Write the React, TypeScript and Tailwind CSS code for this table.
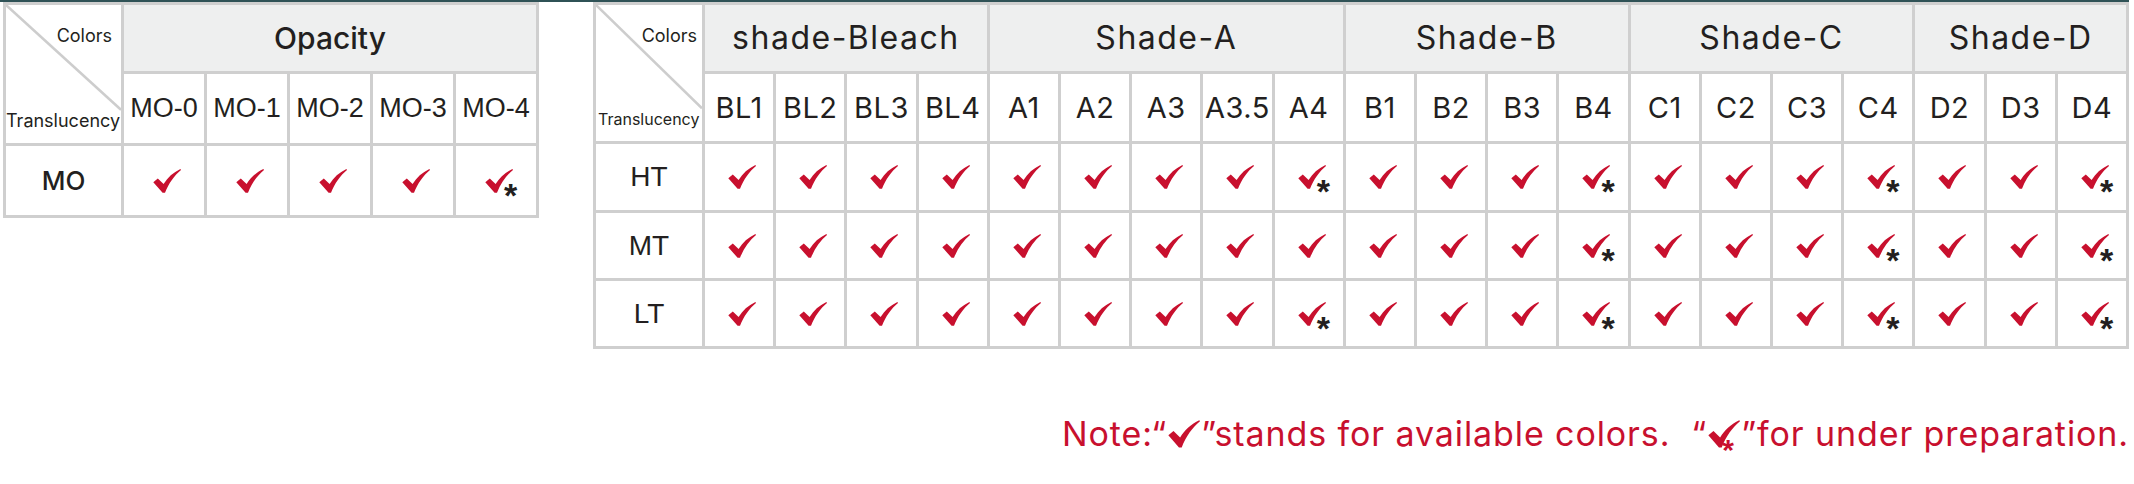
import React from "react";

const Check = ({ className = "" }: { className?: string }) => (
  <svg viewBox="0 0 28 24" className={className} aria-hidden="true">
    <path
      d="M0.3 13.2 L4.8 9.4 L10.6 15 C14.6 8.6 20.2 3.4 27.4 0 L28 0.9 C21.2 6.6 15.8 14 12 23.8 L9.6 23.8 Z"
      fill="#c8102e"
    />
  </svg>
);

const Mark = ({ star }: { star?: boolean }) => (
  <span className="relative inline-block w-[28px] h-[24px] translate-x-[3px]">
    <Check className="block w-[28px] h-[24px]" />
    {star && (
      <span className="absolute left-[19px] top-[9px] font-['Liberation_Sans',Arial,sans-serif] font-bold text-[34px] leading-none text-[#231f20]">
        *
      </span>
    )}
  </span>
);

const cell = "bg-white flex items-center justify-center";
const head = "bg-[#eeefef] flex items-center justify-center";

function Corner({ big }: { big?: boolean }) {
  return (
    <div className="row-span-2 bg-white relative flex flex-col justify-between overflow-hidden">
      <svg className="absolute inset-0 w-full h-full" preserveAspectRatio="none" viewBox="0 0 100 100" aria-hidden="true">
        <line x1="0" y1="0" x2="100" y2="76" stroke="#cdcdcd" strokeWidth="2.6" vectorEffect="non-scaling-stroke" />
      </svg>
      <div className={big ? "relative text-right pr-[9px] pt-[20px] text-[18px] leading-[22px]" : "relative text-right pr-[5px] pt-[20px] text-[18px] leading-[22px]"}>
        Colors
      </div>
      <div className={big ? "relative text-left pl-0 pb-[11px] text-[18px] leading-[22px] whitespace-nowrap" : "relative text-left pl-[2px] pb-[12px] text-[16px] leading-[20px] whitespace-nowrap"}>
        Translucency
      </div>
    </div>
  );
}

function LeftTable() {
  const cols = ["MO-0", "MO-1", "MO-2", "MO-3", "MO-4"];
  return (
    <div className="grid w-[536px] bg-[#cfcfcf] p-[3px] gap-[3px] grid-cols-[115px_repeat(5,minmax(0,1fr))] grid-rows-[66px_69px_69px]">
      <Corner big />
      <div className={`${head} col-span-5 font-medium text-[30px]`}>Opacity</div>
      {cols.map((c) => (
        <div key={c} className={`${cell} font-['Liberation_Sans',Arial,sans-serif] text-[27px]`}>
          {c}
        </div>
      ))}
      <div className={`${cell} font-medium text-[26px]`}>MO</div>
      {cols.map((c, i) => (
        <div key={c} className={cell}>
          <Mark star={i === 4} />
        </div>
      ))}
    </div>
  );
}

const groups = [
  { name: "shade-Bleach", cols: ["BL1", "BL2", "BL3", "BL4"] },
  { name: "Shade-A", cols: ["A1", "A2", "A3", "A3.5", "A4"] },
  { name: "Shade-B", cols: ["B1", "B2", "B3", "B4"] },
  { name: "Shade-C", cols: ["C1", "C2", "C3", "C4"] },
  { name: "Shade-D", cols: ["D2", "D3", "D4"] },
];

const rows: { name: string; stars: string[] }[] = [
  { name: "HT", stars: ["A4", "B4", "C4", "D4"] },
  { name: "MT", stars: ["B4", "C4", "D4"] },
  { name: "LT", stars: ["A4", "B4", "C4", "D4"] },
];

const spanClass: Record<number, string> = {
  3: "col-span-3",
  4: "col-span-4",
  5: "col-span-5",
};

function RightTable() {
  const allCols = groups.flatMap((g) => g.cols);
  return (
    <div className="grid w-[1536px] bg-[#cfcfcf] p-[3px] gap-[3px] grid-cols-[106px_repeat(20,minmax(0,1fr))] grid-rows-[66px_67px_66px_65px_65px]">
      <Corner />
      {groups.map((g) => (
        <div key={g.name} className={`${head} ${spanClass[g.cols.length]} text-[32px] tracking-[1.5px]`}>
          {g.name}
        </div>
      ))}
      {allCols.map((c) => (
        <div key={c} className={`${cell} text-[29px] tracking-[0.5px]`}>
          {c}
        </div>
      ))}
      {rows.map((r) => (
        <React.Fragment key={r.name}>
          <div className={`${cell} font-['Liberation_Sans',Arial,sans-serif] text-[28px]`}>{r.name}</div>
          {allCols.map((c) => (
            <div key={c} className={cell}>
              <Mark star={r.stars.includes(c)} />
            </div>
          ))}
        </React.Fragment>
      ))}
    </div>
  );
}

export default function App() {
  return (
    <div className="w-[2134px] h-[484px] bg-white font-['Inter',sans-serif] text-[#231f20] overflow-hidden">
      <div className="h-[2px] w-[2129px] bg-[#2f5256]" />
      <div className="flex items-start pl-[3px] gap-[54px]">
        <LeftTable />
        <RightTable />
      </div>
      <div className="flex justify-end pr-[5px] mt-[64px]">
        <p className="flex items-center text-[34px] leading-[42px] tracking-[0.9px] text-[#c8102e] whitespace-nowrap">
          <span>Note:“</span>
          <Check className="w-[32px] h-[28px] mx-[1px]" />
          <span>”stands for available colors.&nbsp;&nbsp;“</span>
          <span className="relative inline-block w-[32px] h-[28px] mx-[1px]">
            <Check className="block w-[32px] h-[28px]" />
            <span className="absolute left-[14px] top-[15px] font-['Liberation_Sans',Arial,sans-serif] font-bold text-[30px] leading-none">
              *
            </span>
          </span>
          <span>”for under preparation.</span>
        </p>
      </div>
    </div>
  );
}
